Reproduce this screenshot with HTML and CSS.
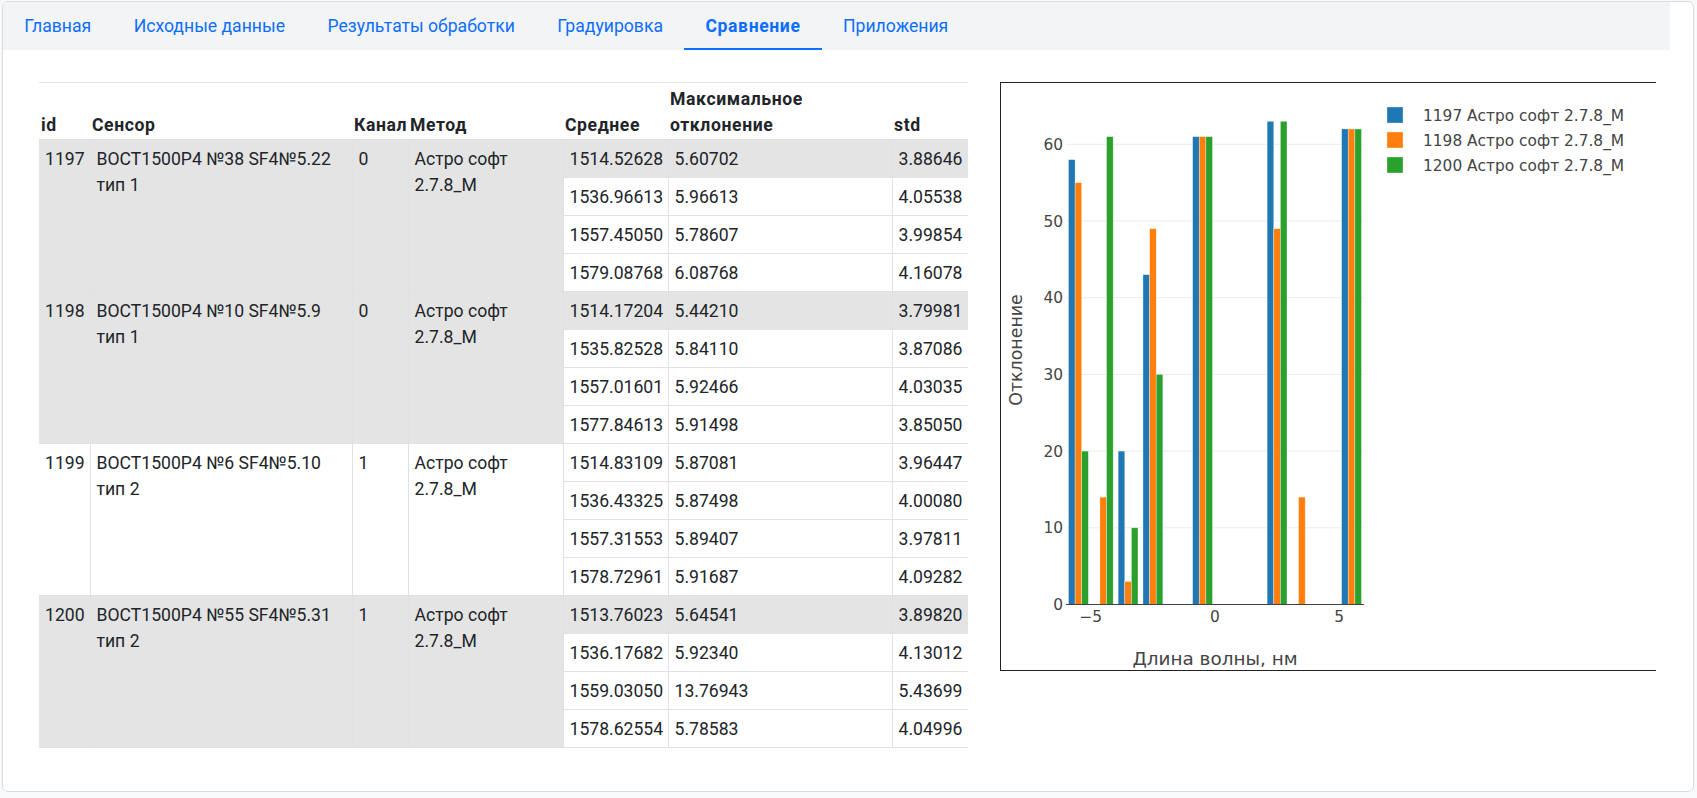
FILE: index.html
```html
<!DOCTYPE html>
<html lang="ru">
<head>
<meta charset="utf-8">
<title>Сравнение</title>
<link rel="stylesheet" href="styles.css">
</head>
<body>
<div class="card">
  <nav class="tabs">
    <a class="tab" href="#">Главная</a>
    <a class="tab" href="#">Исходные данные</a>
    <a class="tab" href="#">Результаты обработки</a>
    <a class="tab" href="#">Градуировка</a>
    <a class="tab active" href="#">Сравнение</a>
    <a class="tab" href="#">Приложения</a>
  </nav>
  <div class="content">
    <table class="cmp">
      <colgroup>
        <col class="c-id"><col class="c-sensor"><col class="c-ch"><col class="c-method"><col class="c-mean"><col class="c-max"><col class="c-std">
      </colgroup>
      <thead>
        <tr><th>id</th><th>Сенсор</th><th>Канал</th><th>Метод</th><th>Среднее</th><th>Максимальное<br>отклонение</th><th>std</th></tr>
      </thead>
      <tbody>
        <tr class="gray"><td rowspan="4" class="grp">1197</td><td rowspan="4" class="grp">BOCT1500P4 №38 SF4№5.22<br>тип 1</td><td rowspan="4" class="grp">0</td><td rowspan="4" class="grp">Астро софт<br>2.7.8_M</td><td>1514.52628</td><td>5.60702</td><td>3.88646</td></tr>
        <tr><td>1536.96613</td><td>5.96613</td><td>4.05538</td></tr>
        <tr><td>1557.45050</td><td>5.78607</td><td>3.99854</td></tr>
        <tr><td>1579.08768</td><td>6.08768</td><td>4.16078</td></tr>

        <tr class="gray"><td rowspan="4" class="grp">1198</td><td rowspan="4" class="grp">BOCT1500P4 №10 SF4№5.9<br>тип 1</td><td rowspan="4" class="grp">0</td><td rowspan="4" class="grp">Астро софт<br>2.7.8_M</td><td>1514.17204</td><td>5.44210</td><td>3.79981</td></tr>
        <tr><td>1535.82528</td><td>5.84110</td><td>3.87086</td></tr>
        <tr><td>1557.01601</td><td>5.92466</td><td>4.03035</td></tr>
        <tr><td>1577.84613</td><td>5.91498</td><td>3.85050</td></tr>

        <tr><td rowspan="4">1199</td><td rowspan="4">BOCT1500P4 №6 SF4№5.10<br>тип 2</td><td rowspan="4">1</td><td rowspan="4">Астро софт<br>2.7.8_M</td><td>1514.83109</td><td>5.87081</td><td>3.96447</td></tr>
        <tr><td>1536.43325</td><td>5.87498</td><td>4.00080</td></tr>
        <tr><td>1557.31553</td><td>5.89407</td><td>3.97811</td></tr>
        <tr><td>1578.72961</td><td>5.91687</td><td>4.09282</td></tr>

        <tr class="gray"><td rowspan="4" class="grp">1200</td><td rowspan="4" class="grp">BOCT1500P4 №55 SF4№5.31<br>тип 2</td><td rowspan="4" class="grp">1</td><td rowspan="4" class="grp">Астро софт<br>2.7.8_M</td><td>1513.76023</td><td>5.64541</td><td>3.89820</td></tr>
        <tr><td>1536.17682</td><td>5.92340</td><td>4.13012</td></tr>
        <tr><td>1559.03050</td><td>13.76943</td><td>5.43699</td></tr>
        <tr><td>1578.62554</td><td>5.78583</td><td>4.04996</td></tr>
      </tbody>
    </table>

    <div class="chart">
      <svg class="plot" width="655" height="587" viewBox="0 0 655 587" xmlns="http://www.w3.org/2000/svg">
        <g class="grid">
          <line x1="65" x2="363" y1="444.8" y2="444.8"/>
          <line x1="65" x2="363" y1="368.1" y2="368.1"/>
          <line x1="65" x2="363" y1="291.4" y2="291.4"/>
          <line x1="65" x2="363" y1="214.7" y2="214.7"/>
          <line x1="65" x2="363" y1="138" y2="138"/>
          <line x1="65" x2="363" y1="61.3" y2="61.3"/>
        </g>
        <g class="bars">
          <rect class="b1" x="67.49" y="76.64" width="6.62" height="444.86"/>
          <rect class="b2" x="74.11" y="99.65" width="6.62" height="421.85"/>
          <rect class="b3" x="80.73" y="368.1" width="6.62" height="153.4"/>

          <rect class="b2" x="98.94" y="414.12" width="6.62" height="107.38"/>
          <rect class="b3" x="105.56" y="53.63" width="6.62" height="467.87"/>

          <rect class="b1" x="117.15" y="368.1" width="6.62" height="153.4"/>
          <rect class="b2" x="123.77" y="498.49" width="6.62" height="23.01"/>
          <rect class="b3" x="130.39" y="444.8" width="6.62" height="76.7"/>

          <rect class="b1" x="141.98" y="191.69" width="6.62" height="329.81"/>
          <rect class="b2" x="148.6" y="145.67" width="6.62" height="375.83"/>
          <rect class="b3" x="155.22" y="291.4" width="6.62" height="230.1"/>

          <rect class="b1" x="191.64" y="53.63" width="6.62" height="467.87"/>
          <rect class="b2" x="198.26" y="53.63" width="6.62" height="467.87"/>
          <rect class="b3" x="204.88" y="53.63" width="6.62" height="467.87"/>

          <rect class="b1" x="266.13" y="38.29" width="6.62" height="483.21"/>
          <rect class="b2" x="272.75" y="145.67" width="6.62" height="375.83"/>
          <rect class="b3" x="279.37" y="38.29" width="6.62" height="483.21"/>

          <rect class="b2" x="297.58" y="414.12" width="6.62" height="107.38"/>

          <rect class="b1" x="340.62" y="45.96" width="6.62" height="475.54"/>
          <rect class="b2" x="347.24" y="45.96" width="6.62" height="475.54"/>
          <rect class="b3" x="353.86" y="45.96" width="6.62" height="475.54"/>
        </g>
        <line class="axis" x1="65" x2="363" y1="521.5" y2="521.5"/>
        <g class="ticks ytick">
          <text x="62" y="527">0</text>
          <text x="62" y="450.3">10</text>
          <text x="62" y="373.6">20</text>
          <text x="62" y="296.9">30</text>
          <text x="62" y="220.2">40</text>
          <text x="62" y="143.5">50</text>
          <text x="62" y="66.8">60</text>
        </g>
        <g class="ticks xtick">
          <text x="89.8" y="539">−5</text>
          <text x="214" y="539">0</text>
          <text x="338.2" y="539">5</text>
        </g>
        <text class="title xtitle" x="214" y="582">Длина волны, нм</text>
        <text class="title ytitle" x="21" y="267" transform="rotate(-90 21 267)">Отклонение</text>
        <g class="legend">
          <rect class="b1" x="386" y="24" width="16" height="16"/>
          <text x="422" y="37.5">1197 Астро софт 2.7.8_M</text>
          <rect class="b2" x="386" y="49" width="16" height="16"/>
          <text x="422" y="62.5">1198 Астро софт 2.7.8_M</text>
          <rect class="b3" x="386" y="74" width="16" height="16"/>
          <text x="422" y="87.5">1200 Астро софт 2.7.8_M</text>
        </g>
      </svg>
    </div>
  </div>
</div>
</body>
</html>
```
FILE: styles.css
```css
html, body {
  margin: 0;
  padding: 0;
}
body {
  background: #f8f9fa;
  font-family: Roboto, "Liberation Sans", Arial, sans-serif;
  font-size: 17.6px;
  color: #212529;
}
.card {
  box-sizing: border-box;
  margin: 1px 3px 0 2px;
  height: 791px;
  background: #fff;
  border: 1px solid #dcdcdc;
  border-radius: 6px;
  overflow: hidden;
}
.tabs {
  display: flex;
  height: 48px;
  margin-right: 23px;
  background: #f3f4f6;
}
.tab {
  display: flex;
  align-items: center;
  padding: 0 21.25px;
  border-top: 2px solid transparent;
  border-bottom: 2px solid transparent;
  color: #0d6efd;
  text-decoration: none;
  white-space: nowrap;
}
.tab.active {
  font-weight: 700;
  letter-spacing: 0.6px;
  border-bottom-color: #0d6efd;
}
.content {
  display: flex;
  align-items: flex-start;
  gap: 32px;
  padding: 32px 0 0 36px;
}
.cmp {
  width: 929px;
  table-layout: fixed;
  border-collapse: collapse;
  border-top: 1px solid #dee2e6;
  line-height: 26px;
  flex: none;
}
.c-id { width: 51px; }
.c-sensor { width: 262px; }
.c-ch { width: 56px; }
.c-method { width: 155px; }
.c-mean { width: 105px; }
.c-max { width: 224px; }
.c-std { width: 76px; }
.cmp th {
  text-align: left;
  vertical-align: bottom;
  font-weight: 700;
  letter-spacing: 0.6px;
  padding: 3px 2px 1px;
  white-space: nowrap;
}
.cmp td {
  vertical-align: top;
  padding: 6px 6px 5px;
  border: 1px solid #dee2e6;
  white-space: nowrap;
}
.cmp tr td:first-child {
  border-left: none;
}
.cmp tr td:last-child {
  border-right: none;
}
.cmp tr.gray td,
.cmp td.grp {
  background: #e4e4e4;
}
.chart {
  box-sizing: border-box;
  width: 656px;
  height: 589px;
  border-top: 1px solid #222;
  border-bottom: 1px solid #222;
  border-left: 1px solid #222;
  flex: none;
}
.plot {
  display: block;
  font-family: "DejaVu Sans", Verdana, sans-serif;
}
.grid line {
  stroke: #ebebeb;
  stroke-width: 1;
}
.axis {
  stroke: #444;
  stroke-width: 1;
}
.b1 { fill: #1f77b4; }
.b2 { fill: #ff7f0e; }
.b3 { fill: #2ca02c; }
.bars rect,
.legend rect {
  stroke: rgba(255, 255, 255, 0.55);
  stroke-width: 0.6;
}
.ticks text,
.legend text {
  font-size: 15.4px;
  fill: #444;
}
.ytick text {
  text-anchor: end;
}
.xtick text {
  text-anchor: middle;
}
.title {
  fill: #444;
  text-anchor: middle;
}
.xtitle {
  font-size: 18.4px;
}
.ytitle {
  font-size: 17.4px;
}
```
